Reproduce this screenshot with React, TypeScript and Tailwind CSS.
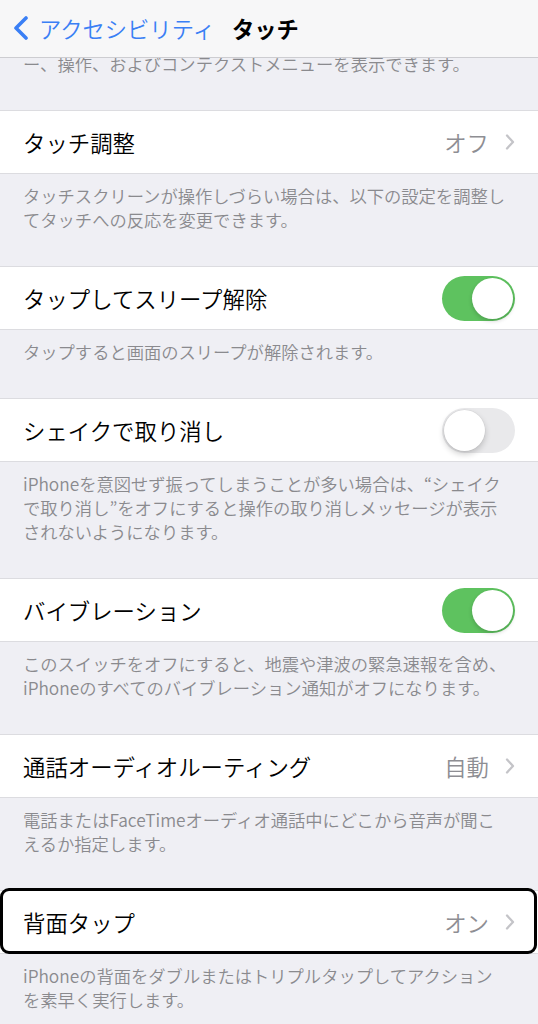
import React from "react";

const FONT = "font-['Noto_Sans_CJK_JP','Noto_Sans',sans-serif]";

function Chevron() {
  return (
    <svg width="10" height="16" viewBox="0 0 10 16" className="ml-[16px] shrink-0">
      <path d="M2 1.5 L8 8 L2 14.5" fill="none" stroke="#c4c4c8" strokeWidth="2.3" strokeLinecap="round" strokeLinejoin="round" />
    </svg>
  );
}

function Toggle({ on }: { on: boolean }) {
  if (on) {
    return (
      <div className="w-[73px] h-[45px] rounded-full bg-[#5ec25f] relative shrink-0">
        <div className="absolute right-[2px] top-[2px] w-[41px] h-[41px] rounded-full bg-white shadow-[0_2px_4px_rgba(0,0,0,0.18)]" />
      </div>
    );
  }
  return (
    <div className="w-[73px] h-[45px] rounded-full bg-[#e9e9eb] relative shrink-0">
      <div className="absolute left-[2px] top-[2px] w-[41px] h-[41px] rounded-full bg-white shadow-[0_3px_6px_rgba(0,0,0,0.2),0_0_0_0.5px_rgba(0,0,0,0.06)]" />
    </div>
  );
}

function Row({
  title,
  value,
  toggle,
  highlight,
}: {
  title: string;
  value?: string;
  toggle?: boolean;
  highlight?: boolean;
}) {
  return (
    <div className="relative h-[64px] bg-white border-y border-[#dcdce0] flex items-center pl-[23px] pr-[23px]">
      <span className="flex-1 text-[22.4px] text-black leading-none whitespace-nowrap font-[350]">{title}</span>
      {toggle !== undefined ? (
        <Toggle on={toggle} />
      ) : (
        <div className="flex items-center">
          <span className="text-[22.4px] text-[#8e8e93] leading-none font-[350]">{value}</span>
          <Chevron />
        </div>
      )}
      {highlight && (
        <div className="absolute left-[0px] right-[1px] -top-[3px] -bottom-[1px] border-[3px] border-black rounded-[9px]" />
      )}
    </div>
  );
}

function Footer({ lines, first }: { lines: string[]; first?: boolean }) {
  return (
    <div
      className={`${first ? "-mt-[6px]" : "pt-[10px]"} pb-[34px] px-[23px] text-[17.3px] leading-[24px] text-[#8a8a8e] font-[350]`}
    >
      {lines.map((l, i) => (
        <div key={i} className="whitespace-nowrap">
          {l}
        </div>
      ))}
    </div>
  );
}

export default function App() {
  return (
    <div className={`w-[538px] h-[1024px] overflow-hidden bg-[#efeff4] ${FONT}`}>
      <div className="relative z-10 h-[58px] bg-[#f7f7f8] border-b border-[#cdcdd1]">
        <div className="h-[56px] flex items-center pl-[12px]">
          <svg width="18" height="24" viewBox="0 0 18 24" className="shrink-0">
            <path d="M14 2 L4 12 L14 22" fill="none" stroke="#3a7ff5" strokeWidth="3.6" strokeLinecap="round" strokeLinejoin="round" />
          </svg>
          <span className="ml-[9px] text-[22.3px] text-[#3a7ff5] leading-none font-[350]">アクセシビリティ</span>
          <span className="ml-[17px] text-[22.3px] font-bold text-black leading-none">タッチ</span>
        </div>
      </div>
      <div className="relative z-0">
        <Footer first lines={["ー、操作、およびコンテクストメニューを表示できます。"]} />
        <Row title="タッチ調整" value="オフ" />
        <Footer
          lines={[
            "タッチスクリーンが操作しづらい場合は、以下の設定を調整し",
            "てタッチへの反応を変更できます。",
          ]}
        />
        <Row title="タップしてスリープ解除" toggle={true} />
        <Footer lines={["タップすると画面のスリープが解除されます。"]} />
        <Row title="シェイクで取り消し" toggle={false} />
        <Footer
          lines={[
            "iPhoneを意図せず振ってしまうことが多い場合は、“シェイク",
            "で取り消し”をオフにすると操作の取り消しメッセージが表示",
            "されないようになります。",
          ]}
        />
        <Row title="バイブレーション" toggle={true} />
        <Footer
          lines={[
            "このスイッチをオフにすると、地震や津波の緊急速報を含め、",
            "iPhoneのすべてのバイブレーション通知がオフになります。",
          ]}
        />
        <Row title="通話オーディオルーティング" value="自動" />
        <Footer
          lines={[
            "電話またはFaceTimeオーディオ通話中にどこから音声が聞こ",
            "えるか指定します。",
          ]}
        />
        <Row title="背面タップ" value="オン" highlight />
        <Footer
          lines={[
            "iPhoneの背面をダブルまたはトリプルタップしてアクション",
            "を素早く実行します。",
          ]}
        />
      </div>
    </div>
  );
}
